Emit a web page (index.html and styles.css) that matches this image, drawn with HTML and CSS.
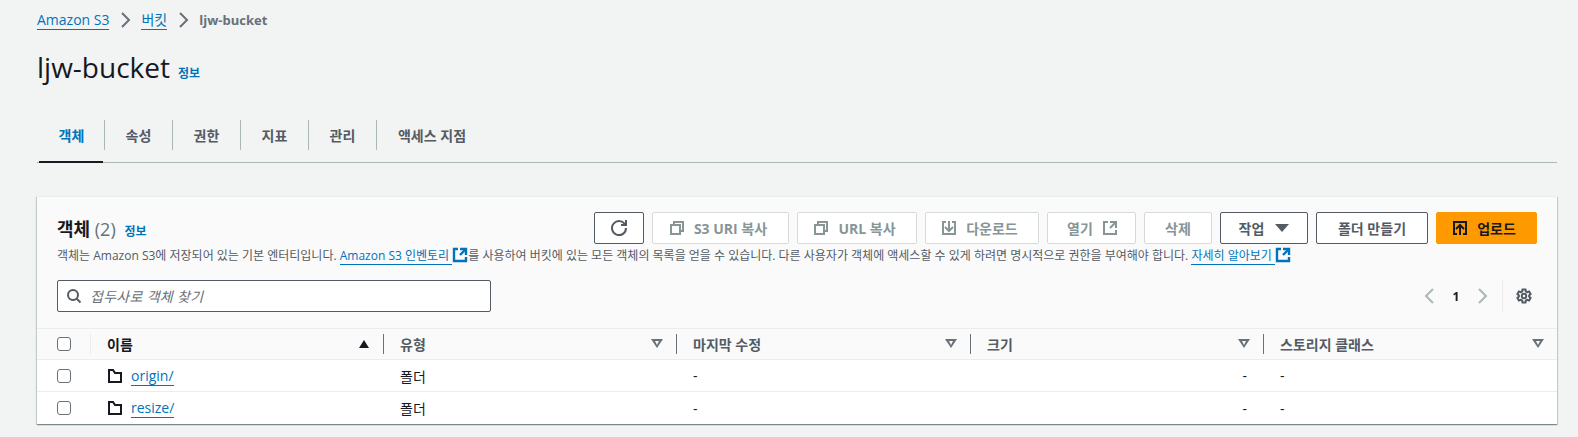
FILE: index.html
```html
<!DOCTYPE html>
<html lang="ko">
<head>
    <meta charset="UTF-8">
    <meta name="viewport" content="width=device-width, initial-scale=1.0">
    <title>ljw-bucket - S3 버킷</title>
    <link rel="stylesheet" href="styles.css">
</head>
<body>
    <svg class="sprite" xmlns="http://www.w3.org/2000/svg">
        <symbol id="i-refresh" viewBox="0 0 16 16"><path d="M10 5h5V0"/><path d="M15 8a7 7 0 1 1-.7-3"/></symbol>
        <symbol id="i-copy" viewBox="0 0 16 16"><path d="M2 5h9v9H2z"/><path d="M5 5V2h9v9h-3"/></symbol>
        <symbol id="i-download" viewBox="0 0 16 16"><path d="M11 2h3v12H2V2h3"/><path d="M4 7l4 4 4-4"/><path d="M8 1v10"/></symbol>
        <symbol id="i-external" viewBox="0 0 16 16"><path d="M14 8V2H8"/><path d="M14 2 8 8"/><path d="M6 2H2v12h12v-4"/></symbol>
        <symbol id="i-upload" viewBox="0 0 16 16"><path d="M11 14h3V2H2v12h3"/><path d="M4 9l4-4 4 4"/><path d="M8 5v10"/></symbol>
        <symbol id="i-search" viewBox="0 0 16 16"><circle cx="7" cy="7" r="5"/><path d="M14.5 14.5 10.6 10.6"/></symbol>
        <symbol id="i-gear" viewBox="0 0 16 16"><circle cx="8" cy="8" r="2.2"/><path d="M6.5 1.5h3l.4 2 1.3.7 1.9-.7 1.5 2.6-1.5 1.3v1.2l1.5 1.3-1.5 2.6-1.9-.7-1.3.7-.4 2h-3l-.4-2-1.3-.7-1.9.7-1.5-2.6 1.5-1.3V7.4L1.4 6.1l1.5-2.6 1.9.7 1.3-.7z"/></symbol>
        <symbol id="i-folder" viewBox="0 0 16 16"><path d="M2 2v12h12V5H8L6 2z"/></symbol>
        <symbol id="i-chevron-right" viewBox="0 0 16 16"><path d="M5 1l7 7-7 7"/></symbol>
        <symbol id="i-chevron-left" viewBox="0 0 16 16"><path d="M11 1 4 8l7 7"/></symbol>
    </svg>

    <main class="page">
        <nav class="crumbs">
            <a class="link" href="#">Amazon S3</a>
            <svg class="icon crumb-sep"><use href="#i-chevron-right"/></svg>
            <a class="link" href="#">버킷</a>
            <svg class="icon crumb-sep"><use href="#i-chevron-right"/></svg>
            <span class="crumb-now">ljw-bucket</span>
        </nav>

        <header class="title-row">
            <h1>ljw-bucket</h1>
            <a class="info" href="#">정보</a>
        </header>

        <div class="tabs">
            <a class="tab active" href="#">객체</a>
            <a class="tab" href="#">속성</a>
            <a class="tab" href="#">권한</a>
            <a class="tab" href="#">지표</a>
            <a class="tab" href="#">관리</a>
            <a class="tab" href="#">액세스 지점</a>
        </div>

        <section class="card">
            <div class="card-head">
                <div class="head-top">
                    <h2>객체 <span class="count">(2)</span> <a class="info" href="#">정보</a></h2>
                    <div class="actions">
                        <button class="btn btn-refresh"><svg class="icon"><use href="#i-refresh"/></svg></button>
                        <button class="btn btn-off btn-lead w-s3"><svg class="icon"><use href="#i-copy"/></svg>S3 URI 복사</button>
                        <button class="btn btn-off btn-lead w-url"><svg class="icon"><use href="#i-copy"/></svg>URL 복사</button>
                        <button class="btn btn-off btn-lead w-down"><svg class="icon"><use href="#i-download"/></svg>다운로드</button>
                        <button class="btn btn-off w-open">열기<svg class="icon"><use href="#i-external"/></svg></button>
                        <button class="btn btn-off w-del">삭제</button>
                        <button class="btn w-act">작업<span class="caret"></span></button>
                        <button class="btn w-folder">폴더 만들기</button>
                        <button class="btn btn-primary btn-lead w-up"><svg class="icon"><use href="#i-upload"/></svg>업로드</button>
                    </div>
                </div>
                <p class="desc">객체는 Amazon S3에 저장되어 있는 기본 엔터티입니다. <a class="link" href="#">Amazon S3 인벤토리 </a><svg class="icon ext"><use href="#i-external"/></svg>를 사용하여 버킷에 있는 모든 객체의 목록을 얻을 수 있습니다. 다른 사용자가 객체에 액세스할 수 있게 하려면 명시적으로 권한을 부여해야 합니다. <a class="link" href="#">자세히 알아보기 </a><svg class="icon ext"><use href="#i-external"/></svg></p>
                <div class="tools">
                    <label class="search">
                        <svg class="icon"><use href="#i-search"/></svg>
                        <input type="text" placeholder="접두사로 객체 찾기">
                    </label>
                    <div class="pager">
                        <svg class="icon pg-arrow"><use href="#i-chevron-left"/></svg>
                        <span class="pg-num">1</span>
                        <svg class="icon pg-arrow"><use href="#i-chevron-right"/></svg>
                        <span class="pg-sep"><svg class="icon gear"><use href="#i-gear"/></svg></span>
                    </div>
                </div>
            </div>

            <div class="grid grid-head">
                <div class="cell check first"><span class="box"></span></div>
                <div class="cell name sorted">이름<span class="sort-up"></span></div>
                <div class="cell">유형<span class="sort-down"></span></div>
                <div class="cell">마지막 수정<span class="sort-down"></span></div>
                <div class="cell">크기<span class="sort-down"></span></div>
                <div class="cell">스토리지 클래스<span class="sort-down"></span></div>
            </div>
            <div class="grid grid-row">
                <div class="cell check"><span class="box"></span></div>
                <div class="cell"><svg class="icon folder"><use href="#i-folder"/></svg><a class="link" href="#">origin/</a></div>
                <div class="cell">폴더</div>
                <div class="cell">-</div>
                <div class="cell right">-</div>
                <div class="cell">-</div>
            </div>
            <div class="grid grid-row">
                <div class="cell check"><span class="box"></span></div>
                <div class="cell"><svg class="icon folder"><use href="#i-folder"/></svg><a class="link" href="#">resize/</a></div>
                <div class="cell">폴더</div>
                <div class="cell">-</div>
                <div class="cell right">-</div>
                <div class="cell">-</div>
            </div>
        </section>
    </main>
</body>
</html>
```

FILE: styles.css
```css
* {
    box-sizing: border-box;
}
html, body {
    margin: 0;
    height: 437px;
    overflow: hidden;
}
body {
    background-color: #f2f3f3;
    color: #16191f;
    font-family: "Open Sans", "Noto Sans CJK KR", sans-serif;
    font-size: 14px;
}
.sprite {
    display: none;
}
.page {
    padding: 0 21px 0 37px;
}
.icon {
    width: 16px;
    height: 16px;
    fill: none;
    stroke: currentColor;
    stroke-width: 2;
    flex: none;
}
a {
    text-decoration: none;
}
.link {
    color: #0073bb;
    border-bottom: 1px solid #0073bb;
}

/* breadcrumb */
.crumbs {
    display: flex;
    align-items: center;
    height: 20px;
    margin-top: 10px;
    font-size: 14px;
    line-height: 18px;
}
.crumb-sep {
    margin: 0 8px;
    color: #687078;
}
.crumb-now {
    color: #687078;
    font-size: 13px;
    font-weight: 700;
}

/* title */
.title-row {
    display: flex;
    align-items: baseline;
    margin-top: 18px;
    height: 38px;
}
h1 {
    margin: 0 8px 0 0;
    font-size: 28px;
    font-weight: 400;
    line-height: 38px;
}
.info {
    color: #0073bb;
    font-size: 12px;
    font-weight: 700;
}

/* tabs */
.tabs {
    display: flex;
    align-items: flex-start;
    height: 44px;
    margin-top: 33px;
    padding-left: 2px;
    padding-top: 1px;
    border-bottom: 1px solid #aab7b8;
}
.tab {
    display: flex;
    align-items: center;
    justify-content: center;
    width: 68px;
    height: 30px;
    border-right: 1px solid #aab7b8;
    color: #545b64;
    font-size: 14px;
    font-weight: 700;
}
.tab:last-child {
    width: 110px;
    border-right: none;
}
.tab.active {
    position: relative;
    width: 66px;
    color: #0073bb;
}
.tab.active::after {
    content: "";
    position: absolute;
    left: 0;
    right: 1px;
    bottom: -13px;
    height: 2px;
    background: #16191f;
}

/* card */
.card {
    margin-top: 33px;
    background: #fff;
    box-shadow: 0 1px 1px 0 rgba(0, 28, 36, 0.3), 1px 1px 1px 0 rgba(0, 28, 36, 0.15), -1px 1px 1px 0 rgba(0, 28, 36, 0.15);
}
.card-head {
    background: #fafafa;
    padding: 15px 20px 16px 20px;
    height: 132px;
    border-top: 1px solid #eaeded;
}
.head-top {
    display: flex;
    align-items: center;
    justify-content: space-between;
    height: 32px;
}
h2 {
    margin: 0;
    font-size: 18px;
    font-weight: 700;
}
h2 .count {
    color: #687078;
    font-weight: 400;
}
h2 .info {
    margin-left: 4px;
}
.actions {
    display: flex;
    gap: 8px;
}
.btn {
    display: flex;
    align-items: center;
    justify-content: center;
    gap: 9px;
    height: 32px;
    padding: 0;
    background: #fff;
    border: 1px solid #545b64;
    border-radius: 2px;
    color: #545b64;
    font-family: inherit;
    font-size: 14px;
    font-weight: 700;
}
.btn-refresh {
    width: 50px;
}
.btn-off {
    border-color: #d5dbdb;
    color: #879596;
}
.btn-lead {
    padding-right: 5px;
}
.btn-primary {
    background: #f90;
    border-color: #f90;
    color: #16191f;
}
.w-s3 { width: 137px; }
.w-url { width: 120px; }
.w-down { width: 114px; }
.w-open { width: 89px; padding-left: 2px; }
.w-del { width: 68px; }
.w-act { width: 88px; }
.w-folder { width: 112px; }
.w-up { width: 101px; }
.caret {
    width: 0;
    height: 0;
    margin-left: 2px;
    border-left: 7px solid transparent;
    border-right: 7px solid transparent;
    border-top: 8px solid #545b64;
}
.desc {
    margin: 3px 0 0;
    color: #545b64;
    font-size: 12px;
    line-height: 18px;
    white-space: nowrap;
}
.ext {
    width: 16px;
    height: 16px;
    vertical-align: -3px;
    color: #0073bb;
    stroke-width: 2.4;
}
.tools {
    display: flex;
    align-items: center;
    justify-content: space-between;
    margin-top: 15px;
}
.search {
    display: flex;
    align-items: center;
    gap: 8px;
    width: 434px;
    height: 32px;
    padding-left: 8px;
    background: #fff;
    border: 1px solid #545b64;
    border-radius: 2px;
    color: #545b64;
}
.search input {
    flex: 1;
    border: none;
    outline: none;
    padding: 0;
    background: transparent;
    font-family: inherit;
    font-size: 14px;
    letter-spacing: 0.3px;
}
.search input::placeholder {
    color: #687078;
    font-style: italic;
}
.pager {
    display: flex;
    align-items: center;
    height: 32px;
    padding-right: 5px;
}
.pg-arrow {
    color: #aab7b8;
}
.pg-num {
    width: 36px;
    text-align: center;
    font-size: 12px;
    font-weight: 700;
}
.pg-sep {
    display: flex;
    align-items: center;
    height: 32px;
    margin-left: 12px;
    padding-left: 13px;
    border-left: 1px solid #eaeded;
    color: #545b64;
}

/* table */
.grid {
    display: grid;
    grid-template-columns: 53px 293px 293px 294px 293px 294px;
    height: 32px;
    font-size: 14px;
}
.grid-head {
    background: #fafafa;
    border-top: 1px solid #eaeded;
    border-bottom: 1px solid #eaeded;
    font-weight: 700;
    color: #545b64;
}
.grid-row {
    border-bottom: 1px solid #eaeded;
}
.grid-row:last-child {
    border-bottom: none;
}
.cell {
    display: flex;
    align-items: center;
    position: relative;
    padding: 0 14px 0 17px;
}
.grid-head .cell {
    padding-bottom: 1px;
}
.cell.check {
    padding: 0 0 0 20px;
}
.right {
    justify-content: flex-end;
    padding-right: 16px;
}
.grid-head .cell::before {
    content: "";
    position: absolute;
    left: 0;
    top: 5px;
    bottom: 5px;
    width: 1px;
    background: #687078;
}
.grid-head .cell.check::before {
    display: none;
}
.grid-head .cell.name::before {
    background: #eaeded;
}
.grid-head .cell.name {
    color: #16191f;
}
.box {
    width: 14px;
    height: 14px;
    background: #fff;
    border: 1px solid #687078;
    border-radius: 3px;
}
.sort-up, .sort-down {
    margin-left: auto;
    width: 0;
    height: 0;
}
.sort-up {
    border-left: 5px solid transparent;
    border-right: 5px solid transparent;
    border-bottom: 8px solid #16191f;
}
.sort-down {
    position: relative;
    left: 1px;
    border-left: 6px solid transparent;
    border-right: 6px solid transparent;
    border-top: 9px solid #687078;
}
.sort-down::after {
    content: "";
    position: absolute;
    left: -2.5px;
    top: -7px;
    border-left: 2.5px solid transparent;
    border-right: 2.5px solid transparent;
    border-top: 4px solid #fafafa;
}
.folder {
    margin-right: 8px;
}
```
